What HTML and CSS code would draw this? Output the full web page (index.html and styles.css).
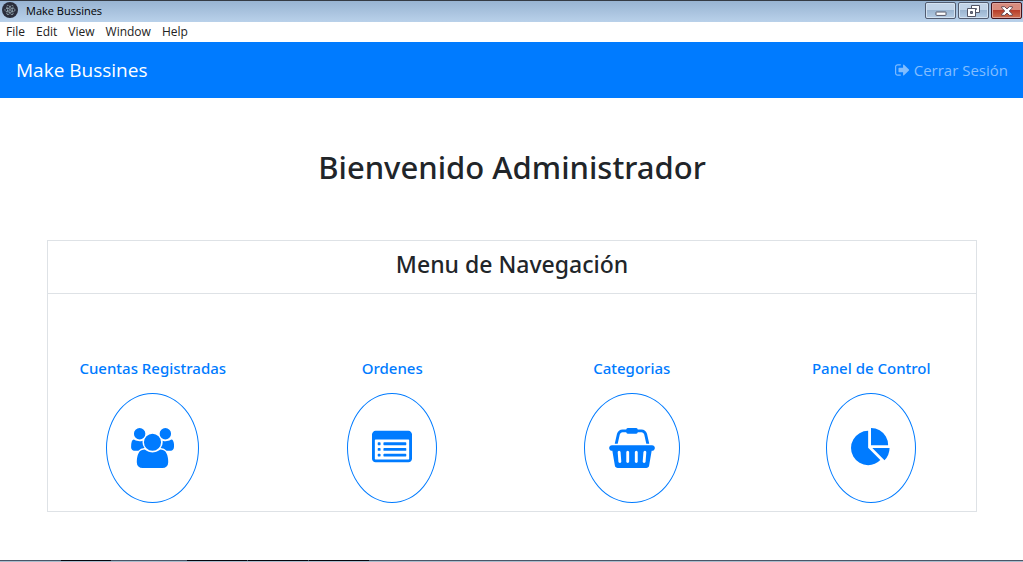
FILE: index.html
```
<!DOCTYPE html>
<html lang="es">
<head>
<meta charset="utf-8">
<title>Make Bussines</title>
<link rel="stylesheet" href="styles.css">
</head>
<body>
<header class="titlebar">
  <svg class="app-icon" viewBox="0 0 16 16" aria-hidden="true">
    <circle cx="8" cy="8" r="8" fill="#2b2e3b"/>
    <g fill="none" stroke="#9fb4bd" stroke-width="0.8" stroke-dasharray="2 0.7">
      <ellipse cx="8" cy="8" rx="5.2" ry="2"/>
      <ellipse cx="8" cy="8" rx="5.2" ry="2" transform="rotate(60 8 8)"/>
      <ellipse cx="8" cy="8" rx="5.2" ry="2" transform="rotate(120 8 8)"/>
    </g>
    <circle cx="8" cy="8" r="0.8" fill="#c5d5da"/>
  </svg>
  <span class="window-title">Make Bussines</span>
  <div class="window-controls">
    <button class="win-btn" type="button" aria-label="Minimizar">
      <svg width="12" height="12" viewBox="0 0 12 12"><rect x="1" y="7" width="10" height="3.4" rx="0.5" fill="#fff" stroke="#535666"/></svg>
    </button>
    <button class="win-btn" type="button" aria-label="Restaurar">
      <svg width="13" height="12" viewBox="0 0 13 12" fill="#fff" stroke="#535666"><path fill-rule="evenodd" d="M4.5.5h8v7h-8zM7.500 3.500h2v1h-2z"/><path fill-rule="evenodd" d="M.5 3.500h8v8h-8zM3.500 6.500h2v2h-2z"/></svg>
    </button>
    <button class="win-btn win-close" type="button" aria-label="Cerrar">
      <svg width="12" height="10" viewBox="0 0 12 10"><path d="M.7.700h3l2.300 2.300L8.300.700h3v1.300L8.200 5l3.100 3v1.300h-3L6 7 3.700 9.300h-3V8l3.100-3L.7 2z" fill="#fff" stroke="#5d4049" stroke-width="0.9"/></svg>
    </button>
  </div>
</header>
<nav class="menubar">
  <button type="button">File</button>
  <button type="button">Edit</button>
  <button type="button">View</button>
  <button type="button">Window</button>
  <button type="button">Help</button>
</nav>
<nav class="navbar">
  <a class="brand" href="#">Make Bussines</a>
  <a class="logout" href="#">
    <svg width="17" height="16" viewBox="0 0 1792 1792" fill="currentColor" aria-hidden="true"><path d="M704 1440q0 4 1 20t.5 26.500-3 23.500-10 19.500-20.500 6.500h-320q-119 0-203.500-84.500t-84.500-203.500v-704q0-119 84.500-203.500t203.500-84.500h320q13 0 22.500 9.500t9.500 22.500q0 4 1 20t.5 26.500-3 23.500-10 19.500-20.500 6.500h-320q-66 0-113 47t-47 113v704q0 66 47 113t113 47h312l11.500 1 11.500 3 8 5.500 7 9 2 13.500zm928-544q0 26-19 45l-544 544q-19 19-45 19t-45-19-19-45v-288h-448q-26 0-45-19t-19-45v-384q0-26 19-45t45-19h448v-288q0-26 19-45t45-19 45 19l544 544q19 19 19 45z"/></svg>
    <span>Cerrar Sesión</span>
  </a>
</nav>
<main class="content">
  <h1 class="welcome">Bienvenido Administrador</h1>
  <section class="panel">
    <h2 class="panel-title">Menu de Navegación</h2>
    <div class="options">
      <a class="option" href="#">
        <span>Cuentas Registradas</span>
        <span class="ring"><svg width="43" height="40" viewBox="0 0 1920 1792" fill="currentColor" aria-hidden="true"><path d="M593 896q-162 5-265 128h-134q-82 0-138-40.500t-56-118.500q0-353 124-353 6 0 43.500 21t97.500 42.500 119 21.500q67 0 133-23-5 37-5 66 0 159 90 256zm1071 637q0 120-73 189.500t-194 69.500h-874q-121 0-194-69.500t-73-189.500q0-53 3.500-103.500t14-109 26.500-108.500 43-97.500 62-81 85.500-53.500 111.500-20q10 0 43 21.500t73 48 107 48 135 21.500 135-21.500 107-48 73-48 43-21.500q61 0 111.500 20t85.500 53.500 62 81 43 97.500 26.500 108.500 14 109 3.500 103.500zm-1024-1277q0 106-75 181t-181 75-181-75-75-181 75-181 181-75 181 75 75 181zm704 384q0 159-112.500 271.500t-271.500 112.500-271.500-112.500-112.500-271.500 112.500-271.500 271.500-112.500 271.500 112.500 112.500 271.500zm576 225q0 78-56 118.500t-138 40.500h-134q-103-123-265-128 90-97 90-256 0-29-5-66 66 23 133 23 59 0 119-21.500t97.500-42.500 43.500-21q124 0 124 353zm-128-609q0 106-75 181t-181 75-181-75-75-181 75-181 181-75 181 75 75 181z"/></svg></span>
      </a>
      <a class="option" href="#">
        <span>Ordenes</span>
        <span class="ring"><svg width="40" height="40" viewBox="0 0 1792 1792" fill="currentColor" aria-hidden="true"><path d="M384 1184v64q0 13-9.500 22.500t-22.500 9.500h-64q-13 0-22.500-9.500t-9.500-22.500v-64q0-13 9.500-22.500t22.500-9.500h64q13 0 22.500 9.500t9.500 22.500zm0-256v64q0 13-9.500 22.500t-22.500 9.500h-64q-13 0-22.500-9.500t-9.500-22.500v-64q0-13 9.500-22.500t22.500-9.500h64q13 0 22.500 9.500t9.500 22.500zm0-256v64q0 13-9.500 22.500t-22.500 9.500h-64q-13 0-22.500-9.500t-9.500-22.500v-64q0-13 9.500-22.500t22.500-9.500h64q13 0 22.500 9.500t9.500 22.500zm1152 512v64q0 13-9.500 22.500t-22.500 9.500h-960q-13 0-22.500-9.500t-9.500-22.500v-64q0-13 9.500-22.500t22.500-9.500h960q13 0 22.500 9.500t9.500 22.500zm0-256v64q0 13-9.500 22.500t-22.500 9.500h-960q-13 0-22.500-9.500t-9.500-22.500v-64q0-13 9.500-22.500t22.500-9.500h960q13 0 22.500 9.500t9.500 22.500zm0-256v64q0 13-9.500 22.500t-22.500 9.500h-960q-13 0-22.500-9.500t-9.500-22.500v-64q0-13 9.500-22.500t22.500-9.500h960q13 0 22.500 9.500t9.500 22.500zm128 704v-832q0-13-9.500-22.500t-22.500-9.500h-1472q-13 0-22.500 9.500t-9.500 22.500v832q0 13 9.500 22.500t22.500 9.500h1472q13 0 22.500-9.500t9.500-22.500zm128-1088v1088q0 66-47 113t-113 47h-1472q-66 0-113-47t-47-113v-1088q0-66 47-113t113-47h1472q66 0 113 47t47 113z"/></svg></span>
      </a>
      <a class="option" href="#">
        <span>Categorias</span>
        <span class="ring"><svg width="46" height="40" viewBox="0 0 2048 1792" fill="currentColor" aria-hidden="true"><path d="M1920 768q53 0 90.500 37.500t37.500 90.500-37.500 90.500-90.500 37.500h-15l-115 662q-8 46-44 76t-82 30h-1280q-46 0-82-30t-44-76l-115-662h-15q-53 0-90.500-37.500t-37.500-90.500 37.500-90.500 90.500-37.500h1792zm-1435 800q26-2 43.500-22.500t15.500-46.500l-32-416q-2-26-22.500-43.500t-46.500-15.500-43.500 22.500-15.500 46.500l32 416q2 25 20.500 42t43.500 17h5zm411-64v-416q0-26-19-45t-45-19-45 19-19 45v416q0 26 19 45t45 19 45-19 19-45zm384 0v-416q0-26-19-45t-45-19-45 19-19 45v416q0 26 19 45t45 19 45-19 19-45zm352 5l32-416q2-26-15.500-46.500t-43.500-22.500-46.500 15.500-22.500 43.500l-32 416q-2 26 15.500 46.500t43.500 22.500h5q25 0 43.500-17t20.500-42zm-1156-1217l-93 412h-132l101-441q19-88 89-143.500t160-55.500h167q0-26 19-45t45-19h384q26 0 45 19t19 45h167q90 0 160 55.500t89 143.500l101 441h-132l-93-412q-11-44-45.500-72t-79.500-28h-167q0 26-19 45t-45 19h-384q-26 0-45-19t-19-45h-167q-45 0-79.500 28t-45.500 72z"/></svg></span>
      </a>
      <a class="option" href="#">
        <span>Panel de Control</span>
        <span class="ring"><svg width="40" height="40" viewBox="0 0 1792 1792" fill="currentColor" aria-hidden="true"><path d="M768 890l546 546q-106 108-247.500 168t-298.500 60q-209 0-385.500-103t-279.500-279.500-103-385.500 103-385.500 279.500-279.500 385.500-103v762zm187 6h773q0 157-60 298.500t-168 247.500zm709-128h-768v-768q209 0 385.500 103t279.500 279.500 103 385.500z"/></svg></span>
      </a>
    </div>
  </section>
</main>
<footer class="taskbar">
  <span></span><span class="task"></span><span></span><span class="task"></span><span class="task"></span><span class="task"></span><span></span>
</footer>
</body>
</html>
```
FILE: styles.css
```
* { box-sizing: border-box; }

body {
  margin: 0;
  min-height: 100vh;
  display: flex;
  flex-direction: column;
  background: #fff;
  color: #212529;
  font-family: "Open Sans", "Noto Sans", sans-serif;
  font-size: 15px;
}

a { text-decoration: none; }

button {
  font: inherit;
  color: inherit;
  border: 0;
  padding: 0;
  background: none;
}

.titlebar {
  height: 22px;
  display: flex;
  align-items: center;
  gap: 8px;
  padding: 0 1px 0 2px;
  border-top: 1px solid #353b44;
  background: linear-gradient(#98b4d2, #b9d1ea);
  color: #000;
  font-size: 11px;
}

.window-title { padding-bottom: 2px; }

.app-icon { width: 16px; height: 16px; margin-bottom: 4px; }

.window-controls {
  display: flex;
  gap: 2px;
  margin: 0 0 2px auto;
}

.win-btn {
  width: 31px;
  height: 17px;
  display: flex;
  align-items: center;
  justify-content: center;
  border: 1px solid #525c70;
  border-radius: 2px;
  box-shadow: inset 0 0 0 1px #d3e2f1;
  background: linear-gradient(#c1d3e7 45%, #9bb5d0 50%, #b5cce4);
}

.win-close {
  border-color: #43131c;
  box-shadow: inset 0 0 0 1px #dda299;
  background: linear-gradient(#d88c7e 45%, #b83e2b 50%, #cd6f51);
}

.menubar {
  height: 20px;
  display: flex;
  align-items: center;
  gap: 11px;
  padding: 0 6px 1px;
  color: #222;
  font-size: 12px;
}

.navbar {
  height: 56px;
  display: flex;
  align-items: center;
  justify-content: space-between;
  padding: 0 15px 0 16px;
  background: #007bff;
}

.brand { color: #fff; font-size: 19px; }

.logout {
  display: flex;
  align-items: center;
  gap: 3px;
  color: #80bdff;
}

.content {
  flex: 1;
  padding: 48px 46px 48px 47px;
}

.welcome {
  margin: 0 0 52px;
  text-align: center;
  font-family: "Noto Sans", "Open Sans", sans-serif;
  font-size: 31px;
  font-weight: 500;
  line-height: 42px;
}

.panel { border: 1px solid #dee2e6; }

.panel-title {
  margin: 0;
  padding: 9px 0 15px;
  border-bottom: 1px solid #dee2e6;
  text-align: center;
  font-family: "Noto Sans", "Open Sans", sans-serif;
  font-size: 23px;
  font-weight: 500;
  line-height: 28px;
}

.options {
  display: grid;
  grid-template-columns: repeat(4, 1fr);
  margin: 0 -15px;
  padding: 63px 0 8px;
}

.option {
  display: flex;
  flex-direction: column;
  align-items: center;
  gap: 14px;
  color: #007bff;
  font-family: "Noto Sans", "Open Sans", sans-serif;
  font-weight: 500;
  line-height: 22px;
}

.ring {
  display: flex;
  padding: 34px 24px;
  border: 1px solid #007bff;
  border-radius: 50%;
}

.taskbar {
  display: grid;
  grid-template-columns: 60px 50px 74px 60px 60px 60px 1fr;
  column-gap: 1px;
  height: 2px;
  border-bottom: 1px solid #a9bccc;
  background: #4a5668;
}

.task { background: #05050d; }
```
